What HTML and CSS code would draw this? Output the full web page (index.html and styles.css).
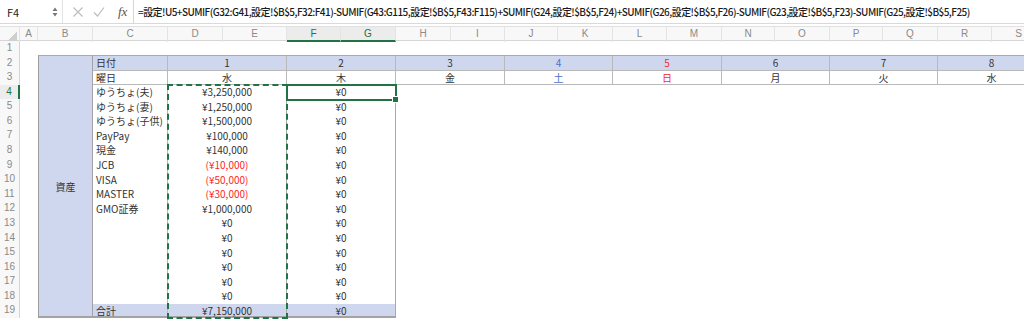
FILE: index.html
```html
<!DOCTYPE html>
<html lang="ja">
<head>
    <meta charset="UTF-8">
    <title>資産管理シート</title>
    <link rel="stylesheet" href="styles.css">
</head>
<body>

<!-- Formula bar -->
<div class="formula-bar">
    <div class="name-box">
        <span>F4</span>
        <svg class="spin" width="6" height="10" viewBox="0 0 6 10"><path d="M3 0.5 L5.5 4 L0.5 4 Z M0.5 6 L5.5 6 L3 9.5 Z" fill="#777"/></svg>
    </div>
    <div class="fx-buttons">
        <svg width="12" height="12" viewBox="0 0 12 12"><path d="M1.5 1.5 L10.5 10.5 M10.5 1.5 L1.5 10.5" stroke="#bdbdbd" stroke-width="1.2" fill="none"/></svg>
        <svg width="12" height="12" viewBox="0 0 12 12"><path d="M1 6.5 L4.5 10 L11 1.5" stroke="#bdbdbd" stroke-width="1.2" fill="none"/></svg>
        <span class="fx">fx</span>
    </div>
    <div class="formula">=設定!U5+SUMIF(G32:G41,設定!$B$5,F32:F41)-SUMIF(G43:G115,設定!$B$5,F43:F115)+SUMIF(G24,設定!$B$5,F24)+SUMIF(G26,設定!$B$5,F26)-SUMIF(G23,設定!$B$5,F23)-SUMIF(G25,設定!$B$5,F25)</div>
</div>

<!-- Column letters -->
<div class="col-heads">
    <div class="corner"></div>
    <div>A</div><div>B</div><div>C</div><div>D</div><div>E</div>
    <div class="selected">F</div><div class="selected">G</div>
    <div>H</div><div>I</div><div>J</div><div>K</div><div>L</div><div>M</div>
    <div>N</div><div>O</div><div>P</div><div>Q</div><div>R</div><div>S</div>
</div>

<div class="sheet">
    <!-- Row numbers -->
    <div class="row-heads">
        <div>1</div><div>2</div><div>3</div><div class="selected">4</div><div>5</div>
        <div>6</div><div>7</div><div>8</div><div>9</div><div>10</div>
        <div>11</div><div>12</div><div>13</div><div>14</div><div>15</div>
        <div>16</div><div>17</div><div>18</div><div>19</div>
    </div>

    <div class="cells">
        <div class="table">
            <!-- row 2 -->
            <div class="cell side">資産</div>
            <div class="cell head label">日付</div>
            <div class="cell head day">1</div>
            <div class="cell head day">2</div>
            <div class="cell head day">3</div>
            <div class="cell head day sat">4</div>
            <div class="cell head day sun">5</div>
            <div class="cell head day">6</div>
            <div class="cell head day">7</div>
            <div class="cell head day">8</div>

            <!-- row 3 -->
            <div class="cell week label">曜日</div>
            <div class="cell week day">水</div>
            <div class="cell week day">木</div>
            <div class="cell week day">金</div>
            <div class="cell week day sat">土</div>
            <div class="cell week day sun">日</div>
            <div class="cell week day">月</div>
            <div class="cell week day">火</div>
            <div class="cell week day">水</div>

            <!-- rows 4-18 -->
            <div class="cell label">ゆうちょ(夫)</div><div class="cell amount">¥3,250,000</div><div class="cell amount">¥0</div>
            <div class="cell label">ゆうちょ(妻)</div><div class="cell amount">¥1,250,000</div><div class="cell amount">¥0</div>
            <div class="cell label">ゆうちょ(子供)</div><div class="cell amount">¥1,500,000</div><div class="cell amount">¥0</div>
            <div class="cell label">PayPay</div><div class="cell amount">¥100,000</div><div class="cell amount">¥0</div>
            <div class="cell label">現金</div><div class="cell amount">¥140,000</div><div class="cell amount">¥0</div>
            <div class="cell label">JCB</div><div class="cell amount minus">(¥10,000)</div><div class="cell amount">¥0</div>
            <div class="cell label">VISA</div><div class="cell amount minus">(¥50,000)</div><div class="cell amount">¥0</div>
            <div class="cell label">MASTER</div><div class="cell amount minus">(¥30,000)</div><div class="cell amount">¥0</div>
            <div class="cell label">GMO証券</div><div class="cell amount">¥1,000,000</div><div class="cell amount">¥0</div>
            <div class="cell label"></div><div class="cell amount">¥0</div><div class="cell amount">¥0</div>
            <div class="cell label"></div><div class="cell amount">¥0</div><div class="cell amount">¥0</div>
            <div class="cell label"></div><div class="cell amount">¥0</div><div class="cell amount">¥0</div>
            <div class="cell label"></div><div class="cell amount">¥0</div><div class="cell amount">¥0</div>
            <div class="cell label"></div><div class="cell amount">¥0</div><div class="cell amount">¥0</div>
            <div class="cell label"></div><div class="cell amount">¥0</div><div class="cell amount">¥0</div>

            <!-- row 19 -->
            <div class="cell label total">合計</div><div class="cell amount total">¥7,150,000</div><div class="cell amount total">¥0</div>

            <!-- selection marks -->
            <div class="copy-range"></div>
            <div class="active-cell"></div>
        </div>
    </div>
</div>

</body>
</html>
```

FILE: styles.css
```css
/* General Reset */
* {
    margin: 0;
    padding: 0;
    box-sizing: border-box;
}

body {
    width: 1024px;
    height: 321px;
    overflow: hidden;
    background: #fff;
    color: #333;
    font-family: "Noto Sans CJK JP", "Liberation Sans", sans-serif;
    font-size: 10px;
}

/* Formula bar */
.formula-bar {
    display: flex;
    align-items: center;
    height: 24px;
    background: #fff;
    border-bottom: 1px solid #d9d9d9;
}

.name-box {
    flex-shrink: 0;
    display: flex;
    align-items: center;
    justify-content: space-between;
    width: 63px;
    height: 100%;
    padding: 0 4px 0 7px;
    border-right: 1px solid #e2e2e2;
    font-size: 11px;
    color: #222;
}

.fx-buttons {
    flex-shrink: 0;
    display: flex;
    align-items: center;
    gap: 9px;
    width: 71px;
    height: 100%;
    padding-left: 9px;
    border-right: 1px solid #d5d5d5;
}

.fx {
    font-family: "Liberation Serif", serif;
    font-style: italic;
    font-size: 13px;
    color: #555;
    margin-left: 4px;
}

.formula {
    flex-shrink: 0;
    padding-left: 4px;
    font-size: 10px;
    font-weight: 500;
    letter-spacing: -0.55px;
    color: #1a1a1a;
    white-space: nowrap;
}

/* Column letters */
.col-heads {
    display: grid;
    grid-template-columns: 20px 18px 55px 75px 55px 64px 54px 55px 55px 54px 53px 55px 54px 55px 53px 55px 53px 55px 54px 54px;
    height: 15px;
    margin-top: 2px;
    background: #f8f8f8;
    border-top: 1px solid #e0e0e0;
    border-bottom: 1px solid #d6d6d6;
    color: #8a8a8a;
    font-family: "Liberation Sans", sans-serif;
    font-size: 10px;
}

.col-heads div {
    text-align: center;
    line-height: 13px;
    border-right: 1px solid #e4e4e4;
}

.col-heads .corner {
    background: linear-gradient(135deg, transparent 55%, #cfcfcf 56%);
    background-size: 11px 10px;
    background-repeat: no-repeat;
    background-position: right 2px bottom 1px;
}

.col-heads .selected {
    color: #217346;
    background: #ececec;
    border-bottom: 2px solid #217346;
}

/* Sheet body */
.sheet {
    display: flex;
}

.row-heads {
    flex-shrink: 0;
    width: 20px;
    background: #f8f8f8;
    border-right: 1px solid #d6d6d6;
    color: #8a8a8a;
    font-family: "Liberation Sans", sans-serif;
    font-size: 10px;
}

.row-heads div {
    height: 14.58px;
    line-height: 14.58px;
    text-align: center;
}

.row-heads .selected {
    color: #217346;
    background: #ececec;
    border-right: 2px solid #217346;
    margin-right: -1px;
}

.cells {
    flex-shrink: 0;
    padding: 14px 0 0 18px;
}

.table {
    position: relative;
    display: grid;
    grid-template-columns: 54px 75px 55px 64px 54px 55px 55px 54px 53px 55px 54px 55px 53px 55px 53px 55px 54px 54px;
    grid-auto-rows: 14.58px;
    border-top: 1px solid #a9a9a9;
    border-left: 1px solid #9d9d9d;
}

.cell {
    line-height: 14px;
    white-space: nowrap;
    border-right: 1px solid #b9b9b9;
}

.side {
    grid-row: span 18;
    display: flex;
    align-items: center;
    justify-content: center;
    background: #cfd7ef;
    border-right: 1px solid #a3a3a3;
    border-bottom: 2px solid #a3a3a3;
    padding-top: 2px;
}

.label {
    grid-column-start: 2;
    padding-left: 3px;
}

.day, .amount {
    grid-column-end: span 2;
    text-align: center;
}

.head {
    background: #cfd7ef;
    border-bottom: 1px solid #b9b9b9;
}

.week {
    border-bottom: 1px solid #b9b9b9;
}

.sat {
    color: #4a72c9;
}

.sun {
    color: #f52a2a;
}

.minus {
    color: #ff2424;
}

.amount {
    border-right-color: #a9a9a9;
}

.total {
    background: #cfd7ef;
    border-bottom: 2px solid #a3a3a3;
    line-height: 13px;
}

/* Copy marquee and active cell */
.copy-range {
    position: absolute;
    grid-column: 3 / 5;
    grid-row: 3 / 19;
    top: -1px;
    left: -1px;
    right: -1px;
    bottom: -1px;
    border: 2px dashed #217346;
}

.active-cell {
    position: absolute;
    grid-column: 5 / 7;
    grid-row: 3 / 4;
    top: -1px;
    left: -1px;
    right: -1px;
    bottom: -1px;
    border: 2px solid #217346;
}

.active-cell::after {
    content: "";
    position: absolute;
    right: -4px;
    bottom: -4px;
    width: 5px;
    height: 5px;
    background: #217346;
    border: 1px solid #fff;
}
```
